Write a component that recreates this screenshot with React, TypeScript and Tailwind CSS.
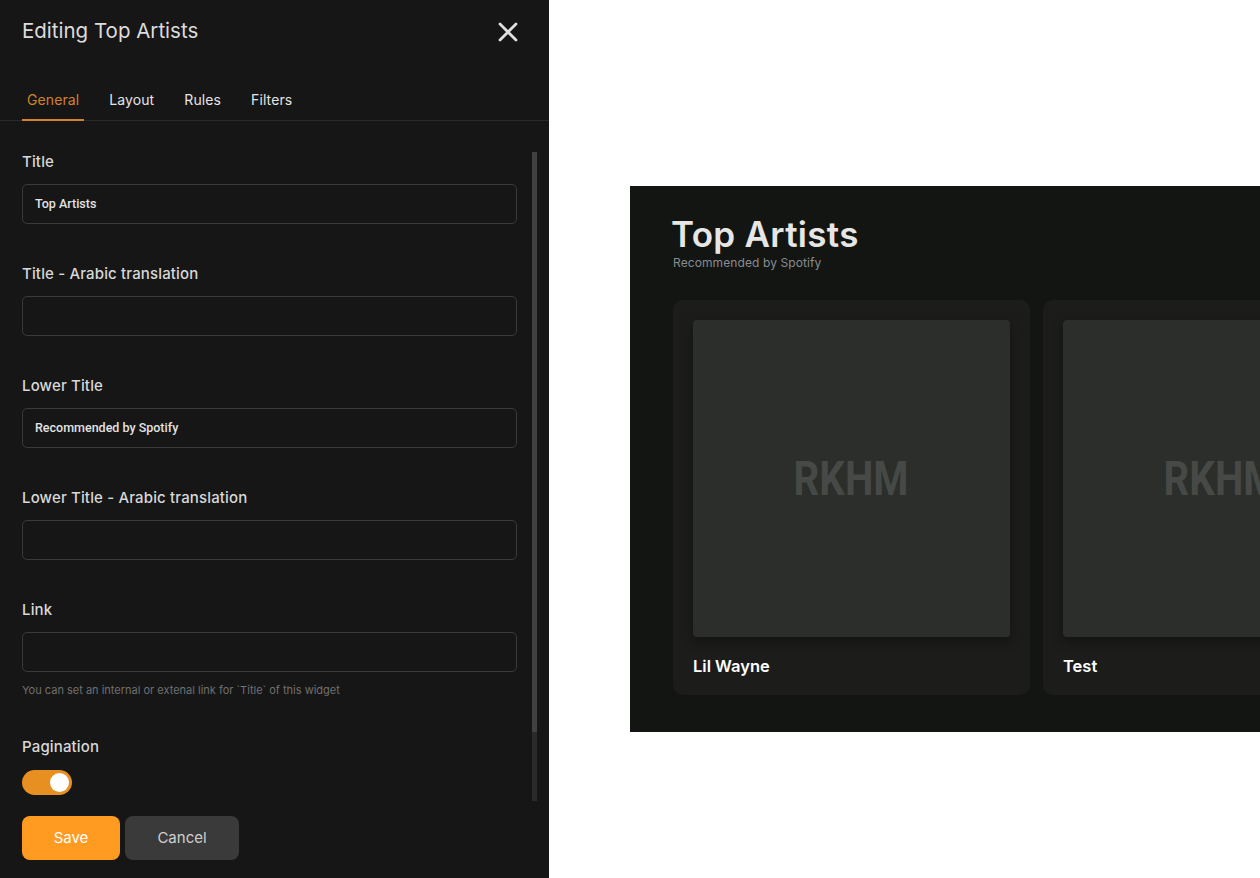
import React from "react";

const Field = ({ label, value, help }: { label: string; value?: string; help?: string }) => (
  <div className="mb-10">
    <div className="text-[15px] leading-[20px] font-medium text-[#d8d8d8] tracking-[0.15px]">{label}</div>
    <div className="mt-3 h-[40px] w-[495px] rounded-[5px] border border-[#3a3a3a] flex items-center px-[12px]">
      <span className="text-[12.5px] font-medium text-[#e2e2e2] [font-family:Roboto,'Liberation_Sans',sans-serif]">{value}</span>
    </div>
    {help && <div className="mt-[11px] text-[11px] leading-[14px] text-[#707070]">{help}</div>}
  </div>
);

const Card = ({ name }: { name: string }) => (
  <div className="w-[357px] h-[395px] shrink-0 rounded-[10px] bg-[#1c1d1b] p-[20px]">
    <div className="w-[317px] h-[317px] rounded-[4px] bg-[#2b2e2a] shadow-[0_4px_12px_rgba(0,0,0,0.35)] flex items-center justify-center">
      <span className="text-[49px] font-bold text-[#464946] scale-x-[0.82] [font-family:Roboto,sans-serif] mt-[1px]">RKHM</span>
    </div>
    <div className="mt-[19px] text-[16.5px] leading-[20px] font-semibold text-white">{name}</div>
  </div>
);

export default function App() {
  return (
    <div className="flex w-[1260px] h-[878px] overflow-hidden bg-white [font-family:Inter,'Noto_Sans',sans-serif]">
      <div className="relative w-[549px] h-[878px] shrink-0 bg-[#161616] flex flex-col">
        <div className="h-[63px] flex items-center justify-between pl-[22px] pr-[32px]">
          <div className="text-[20.5px] text-[#dcdcdc] tracking-[0px]">Editing Top Artists</div>
          <svg width="20" height="20" viewBox="0 0 20 20" className="mr-[-1px]">
            <path d="M2 2 L18 18 M18 2 L2 18" stroke="#e0e0e0" strokeWidth="2.8" strokeLinecap="round" />
          </svg>
        </div>
        <div className="mt-[15px] h-[43px] border-b border-[#2a2a2a] flex pl-[22px] gap-5">
          <div className="relative px-[5px] flex items-center text-[14px] text-[#d4822a] tracking-[0.1px]">
            General
            <div className="absolute left-0 right-0 -bottom-px h-[2px] bg-[#d4822a]" />
          </div>
          <div className="px-[5px] flex items-center text-[14px] text-[#e4e4e4] tracking-[0.1px]">Layout</div>
          <div className="px-[5px] flex items-center text-[14px] text-[#e4e4e4] tracking-[0.1px]">Rules</div>
          <div className="px-[5px] flex items-center text-[14px] text-[#e4e4e4] tracking-[0.1px]">Filters</div>
        </div>
        <div className="relative flex-1 overflow-hidden pl-[22px] pt-[31px]">
          <Field label="Title" value="Top Artists" />
          <Field label="Title - Arabic translation" />
          <Field label="Lower Title" value="Recommended by Spotify" />
          <Field label="Lower Title - Arabic translation" />
          <Field label="Link" help="You can set an internal or extenal link for `Title` of this widget" />
          <div className="mt-[2px]">
            <div className="text-[15px] leading-[20px] font-medium text-[#d8d8d8] tracking-[0.15px]">Pagination</div>
            <div className="mt-[13px] w-[50px] h-[25px] rounded-full bg-[#e88f22] flex items-center justify-end pr-[3px]">
              <div className="w-[19px] h-[19px] rounded-full bg-white" />
            </div>
            <div className="h-[200px]" />
          </div>
          <div className="absolute left-[532px] top-[31px] w-[5px] h-[649px] bg-[#2a2a2a]">
            <div className="w-[5px] h-[580px] bg-[#414141]" />
          </div>
        </div>
        <div className="h-[72px] pt-[10px] pl-[22px] flex gap-[5px]">
          <div className="w-[98px] h-[44px] rounded-[8px] bg-[#ff9b20] flex items-center justify-center text-[15px] text-white">Save</div>
          <div className="w-[114px] h-[44px] rounded-[8px] bg-[#3a3a3a] flex items-center justify-center text-[15px] text-[#cfcfcf]">Cancel</div>
        </div>
      </div>
      <div className="flex-1 min-w-0 overflow-hidden pl-[81px] pt-[186px]">
        <div className="w-[800px] h-[546px] bg-[#131513] pl-[43px] pt-[28px]">
          <div className="-ml-[2px] text-[35px] leading-[40px] font-semibold text-[#e6e6e6] tracking-[0.3px]">Top Artists</div>
          <div className="mt-[2px] text-[12px] leading-[14px] text-[#878c90] tracking-[0.1px]">Recommended by Spotify</div>
          <div className="mt-[30px] flex gap-[13px]">
            <Card name="Lil Wayne" />
            <Card name="Test" />
          </div>
        </div>
      </div>
    </div>
  );
}
